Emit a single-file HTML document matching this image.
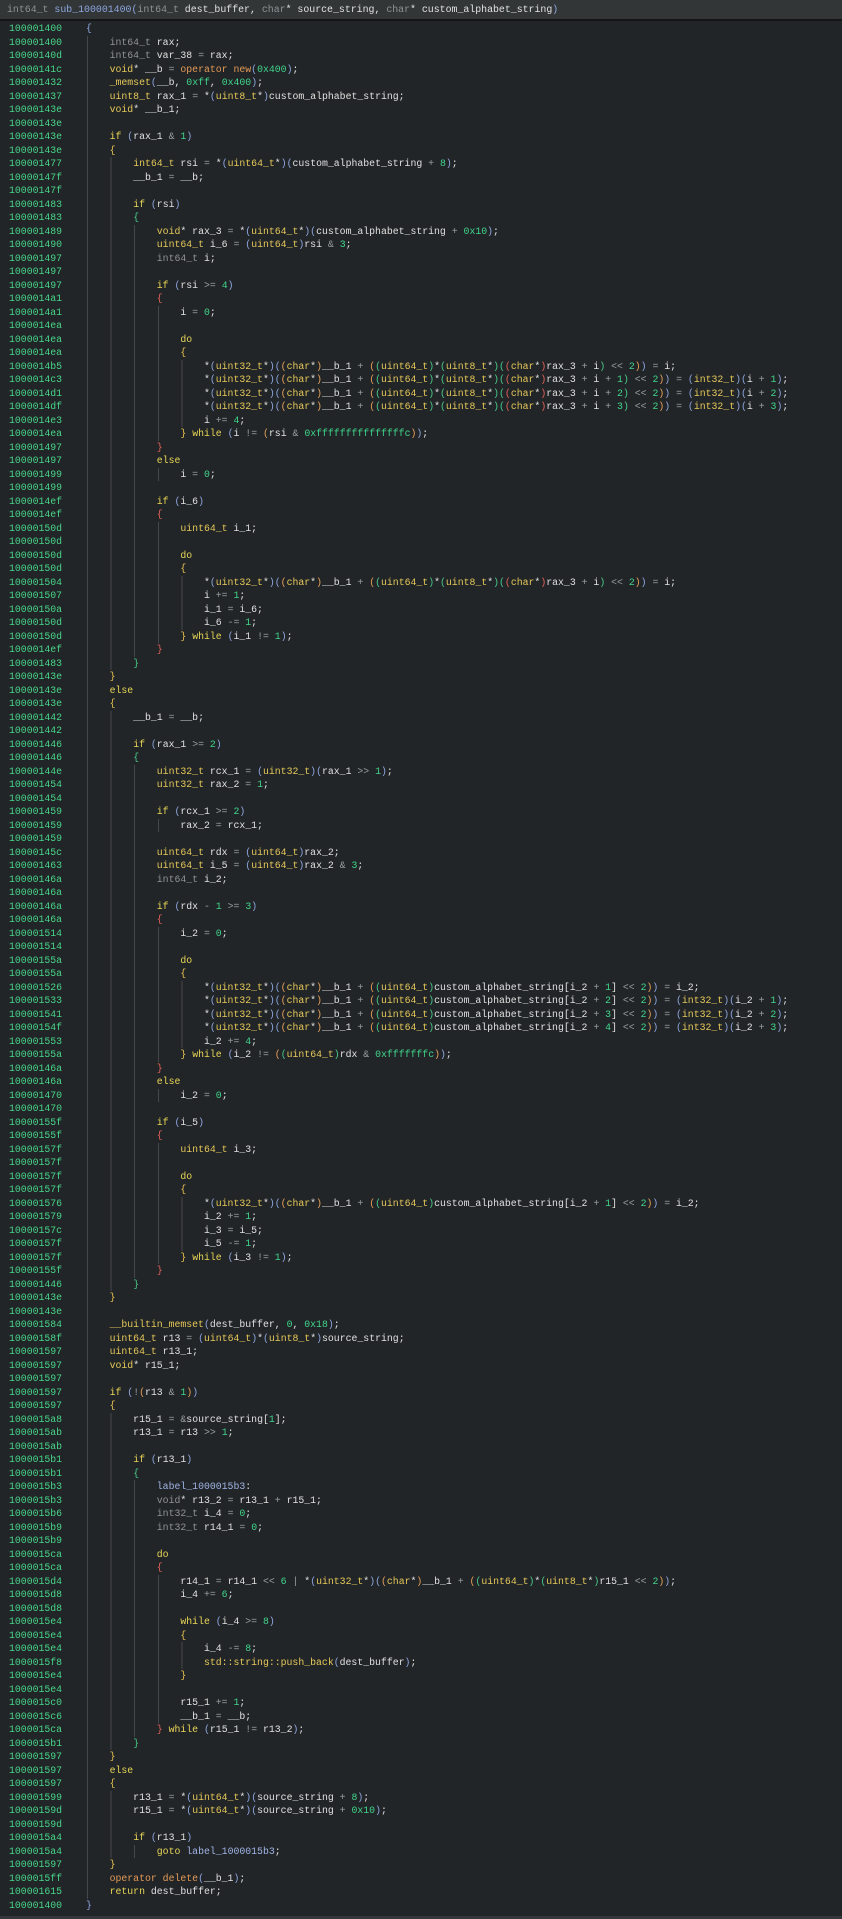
<!DOCTYPE html>
<html><head><meta charset="utf-8"><style>
html,body{margin:0;padding:0;background:#222527;width:842px;height:1919px;overflow:hidden;font-family:"Liberation Mono",monospace;}
#hdr{height:19px;background:#323637;border-bottom:2px solid #141617;font-size:9.9px;line-height:19px;color:#e2e2e2;white-space:pre;padding-left:7px;}
#hdr .g{color:#909294}#hdr .bl{color:#8ea6e0}
#code{position:absolute;left:0;top:22.25px;width:842px;}
.r{position:relative;height:13.5px;line-height:13.5px;font-size:9.83px;white-space:pre;color:#e0e0e0;}
ad{position:absolute;left:9px;top:0;color:#47d68a;}
cd{position:absolute;left:86px;top:0;width:750px;height:13.5px;display:block;background-image:repeating-linear-gradient(90deg,transparent 0,transparent 1px,#45484b 1px,#45484b 2px,transparent 2px,transparent 23.6px);background-repeat:no-repeat;background-size:0 100%;}
.g1 cd{background-size:23.6px 100%}.g2 cd{background-size:47.2px 100%}.g3 cd{background-size:70.8px 100%}
.g4 cd{background-size:94.4px 100%}.g5 cd{background-size:118px 100%}.g6 cd{background-size:141.6px 100%}
k{color:#e8d657}t{color:#e5c85a}d{color:#909294}n{color:#3fd58c}x{color:#9a9ea2}o{color:#e39a58}l{color:#9fb4e6}
q1{color:#8ea6e0}q2{color:#e5a05a}q3{color:#48c98a}q4{color:#e0605a}
c0{color:#8ea6e0}c1{color:#e5c050}c2{color:#48c98a}c3{color:#e0605a}
#bot{position:absolute;left:0;top:1916px;width:842px;height:3px;background:#34383a;}
</style></head><body>
<div id="hdr"><span class="g">int64_t</span> <span class="bl">sub_100001400(</span><span class="g">int64_t</span> dest_buffer, <span class="g">char</span>* source_string, <span class="g">char</span>* custom_alphabet_string<span class="bl">)</span></div>
<div id="code">
<div class="r"><ad>100001400</ad><cd><c0>{</c0></cd></div>
<div class="r g1"><ad>100001400</ad><cd>    <d>int64_t</d> rax;</cd></div>
<div class="r g1"><ad>10000140d</ad><cd>    <d>int64_t</d> var_38 <x>=</x> rax;</cd></div>
<div class="r g1"><ad>10000141c</ad><cd>    <t>void</t>* __b <x>=</x> <o>operator new</o><q1>(</q1><n>0x400</n><q1>)</q1>;</cd></div>
<div class="r g1"><ad>100001432</ad><cd>    <t>_memset</t><q1>(</q1>__b, <n>0xff</n>, <n>0x400</n><q1>)</q1>;</cd></div>
<div class="r g1"><ad>100001437</ad><cd>    <t>uint8_t</t> rax_1 <x>=</x> *<q1>(</q1><t>uint8_t</t>*<q1>)</q1>custom_alphabet_string;</cd></div>
<div class="r g1"><ad>10000143e</ad><cd>    <t>void</t>* __b_1;</cd></div>
<div class="r g1"><ad>10000143e</ad><cd></cd></div>
<div class="r g1"><ad>10000143e</ad><cd>    <k>if</k> <q1>(</q1>rax_1 <x>&amp;</x> <n>1</n><q1>)</q1></cd></div>
<div class="r g1"><ad>10000143e</ad><cd>    <c1>{</c1></cd></div>
<div class="r g2"><ad>100001477</ad><cd>        <t>int64_t</t> rsi <x>=</x> *<q1>(</q1><t>uint64_t</t>*<q1>)</q1><q1>(</q1>custom_alphabet_string <x>+</x> <n>8</n><q1>)</q1>;</cd></div>
<div class="r g2"><ad>10000147f</ad><cd>        __b_1 <x>=</x> __b;</cd></div>
<div class="r g2"><ad>10000147f</ad><cd></cd></div>
<div class="r g2"><ad>100001483</ad><cd>        <k>if</k> <q1>(</q1>rsi<q1>)</q1></cd></div>
<div class="r g2"><ad>100001483</ad><cd>        <c2>{</c2></cd></div>
<div class="r g3"><ad>100001489</ad><cd>            <t>void</t>* rax_3 <x>=</x> *<q1>(</q1><t>uint64_t</t>*<q1>)</q1><q1>(</q1>custom_alphabet_string <x>+</x> <n>0x10</n><q1>)</q1>;</cd></div>
<div class="r g3"><ad>100001490</ad><cd>            <t>uint64_t</t> i_6 <x>=</x> <q1>(</q1><t>uint64_t</t><q1>)</q1>rsi <x>&amp;</x> <n>3</n>;</cd></div>
<div class="r g3"><ad>100001497</ad><cd>            <d>int64_t</d> i;</cd></div>
<div class="r g3"><ad>100001497</ad><cd></cd></div>
<div class="r g3"><ad>100001497</ad><cd>            <k>if</k> <q1>(</q1>rsi <x>&gt;=</x> <n>4</n><q1>)</q1></cd></div>
<div class="r g3"><ad>1000014a1</ad><cd>            <c3>{</c3></cd></div>
<div class="r g4"><ad>1000014a1</ad><cd>                i <x>=</x> <n>0</n>;</cd></div>
<div class="r g4"><ad>1000014ea</ad><cd></cd></div>
<div class="r g4"><ad>1000014ea</ad><cd>                <k>do</k></cd></div>
<div class="r g4"><ad>1000014ea</ad><cd>                <c1>{</c1></cd></div>
<div class="r g5"><ad>1000014b5</ad><cd>                    *<q1>(</q1><t>uint32_t</t>*<q1>)</q1><q1>(</q1><q2>(</q2><t>char</t>*<q2>)</q2>__b_1 <x>+</x> <q2>(</q2><q3>(</q3><t>uint64_t</t><q3>)</q3>*<q3>(</q3><t>uint8_t</t>*<q3>)</q3><q3>(</q3><q4>(</q4><t>char</t>*<q4>)</q4>rax_3 <x>+</x> i<q3>)</q3> <x>&lt;&lt;</x> <n>2</n><q2>)</q2><q1>)</q1> <x>=</x> i;</cd></div>
<div class="r g5"><ad>1000014c3</ad><cd>                    *<q1>(</q1><t>uint32_t</t>*<q1>)</q1><q1>(</q1><q2>(</q2><t>char</t>*<q2>)</q2>__b_1 <x>+</x> <q2>(</q2><q3>(</q3><t>uint64_t</t><q3>)</q3>*<q3>(</q3><t>uint8_t</t>*<q3>)</q3><q3>(</q3><q4>(</q4><t>char</t>*<q4>)</q4>rax_3 <x>+</x> i <x>+</x> <n>1</n><q3>)</q3> <x>&lt;&lt;</x> <n>2</n><q2>)</q2><q1>)</q1> <x>=</x> <q1>(</q1><t>int32_t</t><q1>)</q1><q1>(</q1>i <x>+</x> <n>1</n><q1>)</q1>;</cd></div>
<div class="r g5"><ad>1000014d1</ad><cd>                    *<q1>(</q1><t>uint32_t</t>*<q1>)</q1><q1>(</q1><q2>(</q2><t>char</t>*<q2>)</q2>__b_1 <x>+</x> <q2>(</q2><q3>(</q3><t>uint64_t</t><q3>)</q3>*<q3>(</q3><t>uint8_t</t>*<q3>)</q3><q3>(</q3><q4>(</q4><t>char</t>*<q4>)</q4>rax_3 <x>+</x> i <x>+</x> <n>2</n><q3>)</q3> <x>&lt;&lt;</x> <n>2</n><q2>)</q2><q1>)</q1> <x>=</x> <q1>(</q1><t>int32_t</t><q1>)</q1><q1>(</q1>i <x>+</x> <n>2</n><q1>)</q1>;</cd></div>
<div class="r g5"><ad>1000014df</ad><cd>                    *<q1>(</q1><t>uint32_t</t>*<q1>)</q1><q1>(</q1><q2>(</q2><t>char</t>*<q2>)</q2>__b_1 <x>+</x> <q2>(</q2><q3>(</q3><t>uint64_t</t><q3>)</q3>*<q3>(</q3><t>uint8_t</t>*<q3>)</q3><q3>(</q3><q4>(</q4><t>char</t>*<q4>)</q4>rax_3 <x>+</x> i <x>+</x> <n>3</n><q3>)</q3> <x>&lt;&lt;</x> <n>2</n><q2>)</q2><q1>)</q1> <x>=</x> <q1>(</q1><t>int32_t</t><q1>)</q1><q1>(</q1>i <x>+</x> <n>3</n><q1>)</q1>;</cd></div>
<div class="r g5"><ad>1000014e3</ad><cd>                    i <x>+=</x> <n>4</n>;</cd></div>
<div class="r g4"><ad>1000014ea</ad><cd>                <c1>}</c1> <k>while</k> <q1>(</q1>i <x>!=</x> <q2>(</q2>rsi <x>&amp;</x> <n>0xfffffffffffffffc</n><q2>)</q2><q1>)</q1>;</cd></div>
<div class="r g3"><ad>100001497</ad><cd>            <c3>}</c3></cd></div>
<div class="r g3"><ad>100001497</ad><cd>            <k>else</k></cd></div>
<div class="r g4"><ad>100001499</ad><cd>                i <x>=</x> <n>0</n>;</cd></div>
<div class="r g3"><ad>100001499</ad><cd></cd></div>
<div class="r g3"><ad>1000014ef</ad><cd>            <k>if</k> <q1>(</q1>i_6<q1>)</q1></cd></div>
<div class="r g3"><ad>1000014ef</ad><cd>            <c3>{</c3></cd></div>
<div class="r g4"><ad>10000150d</ad><cd>                <t>uint64_t</t> i_1;</cd></div>
<div class="r g4"><ad>10000150d</ad><cd></cd></div>
<div class="r g4"><ad>10000150d</ad><cd>                <k>do</k></cd></div>
<div class="r g4"><ad>10000150d</ad><cd>                <c1>{</c1></cd></div>
<div class="r g5"><ad>100001504</ad><cd>                    *<q1>(</q1><t>uint32_t</t>*<q1>)</q1><q1>(</q1><q2>(</q2><t>char</t>*<q2>)</q2>__b_1 <x>+</x> <q2>(</q2><q3>(</q3><t>uint64_t</t><q3>)</q3>*<q3>(</q3><t>uint8_t</t>*<q3>)</q3><q3>(</q3><q4>(</q4><t>char</t>*<q4>)</q4>rax_3 <x>+</x> i<q3>)</q3> <x>&lt;&lt;</x> <n>2</n><q2>)</q2><q1>)</q1> <x>=</x> i;</cd></div>
<div class="r g5"><ad>100001507</ad><cd>                    i <x>+=</x> <n>1</n>;</cd></div>
<div class="r g5"><ad>10000150a</ad><cd>                    i_1 <x>=</x> i_6;</cd></div>
<div class="r g5"><ad>10000150d</ad><cd>                    i_6 <x>-=</x> <n>1</n>;</cd></div>
<div class="r g4"><ad>10000150d</ad><cd>                <c1>}</c1> <k>while</k> <q1>(</q1>i_1 <x>!=</x> <n>1</n><q1>)</q1>;</cd></div>
<div class="r g3"><ad>1000014ef</ad><cd>            <c3>}</c3></cd></div>
<div class="r g2"><ad>100001483</ad><cd>        <c2>}</c2></cd></div>
<div class="r g1"><ad>10000143e</ad><cd>    <c1>}</c1></cd></div>
<div class="r g1"><ad>10000143e</ad><cd>    <k>else</k></cd></div>
<div class="r g1"><ad>10000143e</ad><cd>    <c1>{</c1></cd></div>
<div class="r g2"><ad>100001442</ad><cd>        __b_1 <x>=</x> __b;</cd></div>
<div class="r g2"><ad>100001442</ad><cd></cd></div>
<div class="r g2"><ad>100001446</ad><cd>        <k>if</k> <q1>(</q1>rax_1 <x>&gt;=</x> <n>2</n><q1>)</q1></cd></div>
<div class="r g2"><ad>100001446</ad><cd>        <c2>{</c2></cd></div>
<div class="r g3"><ad>10000144e</ad><cd>            <t>uint32_t</t> rcx_1 <x>=</x> <q1>(</q1><t>uint32_t</t><q1>)</q1><q1>(</q1>rax_1 <x>&gt;&gt;</x> <n>1</n><q1>)</q1>;</cd></div>
<div class="r g3"><ad>100001454</ad><cd>            <t>uint32_t</t> rax_2 <x>=</x> <n>1</n>;</cd></div>
<div class="r g3"><ad>100001454</ad><cd></cd></div>
<div class="r g3"><ad>100001459</ad><cd>            <k>if</k> <q1>(</q1>rcx_1 <x>&gt;=</x> <n>2</n><q1>)</q1></cd></div>
<div class="r g4"><ad>100001459</ad><cd>                rax_2 <x>=</x> rcx_1;</cd></div>
<div class="r g3"><ad>100001459</ad><cd></cd></div>
<div class="r g3"><ad>10000145c</ad><cd>            <t>uint64_t</t> rdx <x>=</x> <q1>(</q1><t>uint64_t</t><q1>)</q1>rax_2;</cd></div>
<div class="r g3"><ad>100001463</ad><cd>            <t>uint64_t</t> i_5 <x>=</x> <q1>(</q1><t>uint64_t</t><q1>)</q1>rax_2 <x>&amp;</x> <n>3</n>;</cd></div>
<div class="r g3"><ad>10000146a</ad><cd>            <d>int64_t</d> i_2;</cd></div>
<div class="r g3"><ad>10000146a</ad><cd></cd></div>
<div class="r g3"><ad>10000146a</ad><cd>            <k>if</k> <q1>(</q1>rdx <x>-</x> <n>1</n> <x>&gt;=</x> <n>3</n><q1>)</q1></cd></div>
<div class="r g3"><ad>10000146a</ad><cd>            <c3>{</c3></cd></div>
<div class="r g4"><ad>100001514</ad><cd>                i_2 <x>=</x> <n>0</n>;</cd></div>
<div class="r g4"><ad>100001514</ad><cd></cd></div>
<div class="r g4"><ad>10000155a</ad><cd>                <k>do</k></cd></div>
<div class="r g4"><ad>10000155a</ad><cd>                <c1>{</c1></cd></div>
<div class="r g5"><ad>100001526</ad><cd>                    *<q1>(</q1><t>uint32_t</t>*<q1>)</q1><q1>(</q1><q2>(</q2><t>char</t>*<q2>)</q2>__b_1 <x>+</x> <q2>(</q2><q3>(</q3><t>uint64_t</t><q3>)</q3>custom_alphabet_string[i_2 <x>+</x> <n>1</n>] <x>&lt;&lt;</x> <n>2</n><q2>)</q2><q1>)</q1> <x>=</x> i_2;</cd></div>
<div class="r g5"><ad>100001533</ad><cd>                    *<q1>(</q1><t>uint32_t</t>*<q1>)</q1><q1>(</q1><q2>(</q2><t>char</t>*<q2>)</q2>__b_1 <x>+</x> <q2>(</q2><q3>(</q3><t>uint64_t</t><q3>)</q3>custom_alphabet_string[i_2 <x>+</x> <n>2</n>] <x>&lt;&lt;</x> <n>2</n><q2>)</q2><q1>)</q1> <x>=</x> <q1>(</q1><t>int32_t</t><q1>)</q1><q1>(</q1>i_2 <x>+</x> <n>1</n><q1>)</q1>;</cd></div>
<div class="r g5"><ad>100001541</ad><cd>                    *<q1>(</q1><t>uint32_t</t>*<q1>)</q1><q1>(</q1><q2>(</q2><t>char</t>*<q2>)</q2>__b_1 <x>+</x> <q2>(</q2><q3>(</q3><t>uint64_t</t><q3>)</q3>custom_alphabet_string[i_2 <x>+</x> <n>3</n>] <x>&lt;&lt;</x> <n>2</n><q2>)</q2><q1>)</q1> <x>=</x> <q1>(</q1><t>int32_t</t><q1>)</q1><q1>(</q1>i_2 <x>+</x> <n>2</n><q1>)</q1>;</cd></div>
<div class="r g5"><ad>10000154f</ad><cd>                    *<q1>(</q1><t>uint32_t</t>*<q1>)</q1><q1>(</q1><q2>(</q2><t>char</t>*<q2>)</q2>__b_1 <x>+</x> <q2>(</q2><q3>(</q3><t>uint64_t</t><q3>)</q3>custom_alphabet_string[i_2 <x>+</x> <n>4</n>] <x>&lt;&lt;</x> <n>2</n><q2>)</q2><q1>)</q1> <x>=</x> <q1>(</q1><t>int32_t</t><q1>)</q1><q1>(</q1>i_2 <x>+</x> <n>3</n><q1>)</q1>;</cd></div>
<div class="r g5"><ad>100001553</ad><cd>                    i_2 <x>+=</x> <n>4</n>;</cd></div>
<div class="r g4"><ad>10000155a</ad><cd>                <c1>}</c1> <k>while</k> <q1>(</q1>i_2 <x>!=</x> <q2>(</q2><q3>(</q3><t>uint64_t</t><q3>)</q3>rdx <x>&amp;</x> <n>0xfffffffc</n><q2>)</q2><q1>)</q1>;</cd></div>
<div class="r g3"><ad>10000146a</ad><cd>            <c3>}</c3></cd></div>
<div class="r g3"><ad>10000146a</ad><cd>            <k>else</k></cd></div>
<div class="r g4"><ad>100001470</ad><cd>                i_2 <x>=</x> <n>0</n>;</cd></div>
<div class="r g3"><ad>100001470</ad><cd></cd></div>
<div class="r g3"><ad>10000155f</ad><cd>            <k>if</k> <q1>(</q1>i_5<q1>)</q1></cd></div>
<div class="r g3"><ad>10000155f</ad><cd>            <c3>{</c3></cd></div>
<div class="r g4"><ad>10000157f</ad><cd>                <t>uint64_t</t> i_3;</cd></div>
<div class="r g4"><ad>10000157f</ad><cd></cd></div>
<div class="r g4"><ad>10000157f</ad><cd>                <k>do</k></cd></div>
<div class="r g4"><ad>10000157f</ad><cd>                <c1>{</c1></cd></div>
<div class="r g5"><ad>100001576</ad><cd>                    *<q1>(</q1><t>uint32_t</t>*<q1>)</q1><q1>(</q1><q2>(</q2><t>char</t>*<q2>)</q2>__b_1 <x>+</x> <q2>(</q2><q3>(</q3><t>uint64_t</t><q3>)</q3>custom_alphabet_string[i_2 <x>+</x> <n>1</n>] <x>&lt;&lt;</x> <n>2</n><q2>)</q2><q1>)</q1> <x>=</x> i_2;</cd></div>
<div class="r g5"><ad>100001579</ad><cd>                    i_2 <x>+=</x> <n>1</n>;</cd></div>
<div class="r g5"><ad>10000157c</ad><cd>                    i_3 <x>=</x> i_5;</cd></div>
<div class="r g5"><ad>10000157f</ad><cd>                    i_5 <x>-=</x> <n>1</n>;</cd></div>
<div class="r g4"><ad>10000157f</ad><cd>                <c1>}</c1> <k>while</k> <q1>(</q1>i_3 <x>!=</x> <n>1</n><q1>)</q1>;</cd></div>
<div class="r g3"><ad>10000155f</ad><cd>            <c3>}</c3></cd></div>
<div class="r g2"><ad>100001446</ad><cd>        <c2>}</c2></cd></div>
<div class="r g1"><ad>10000143e</ad><cd>    <c1>}</c1></cd></div>
<div class="r g1"><ad>10000143e</ad><cd></cd></div>
<div class="r g1"><ad>100001584</ad><cd>    <t>__builtin_memset</t><q1>(</q1>dest_buffer, <n>0</n>, <n>0x18</n><q1>)</q1>;</cd></div>
<div class="r g1"><ad>10000158f</ad><cd>    <t>uint64_t</t> r13 <x>=</x> <q1>(</q1><t>uint64_t</t><q1>)</q1>*<q1>(</q1><t>uint8_t</t>*<q1>)</q1>source_string;</cd></div>
<div class="r g1"><ad>100001597</ad><cd>    <t>uint64_t</t> r13_1;</cd></div>
<div class="r g1"><ad>100001597</ad><cd>    <t>void</t>* r15_1;</cd></div>
<div class="r g1"><ad>100001597</ad><cd></cd></div>
<div class="r g1"><ad>100001597</ad><cd>    <k>if</k> <q1>(</q1><x>!</x><q2>(</q2>r13 <x>&amp;</x> <n>1</n><q2>)</q2><q1>)</q1></cd></div>
<div class="r g1"><ad>100001597</ad><cd>    <c1>{</c1></cd></div>
<div class="r g2"><ad>1000015a8</ad><cd>        r15_1 <x>=</x> <x>&amp;</x>source_string[<n>1</n>];</cd></div>
<div class="r g2"><ad>1000015ab</ad><cd>        r13_1 <x>=</x> r13 <x>&gt;&gt;</x> <n>1</n>;</cd></div>
<div class="r g2"><ad>1000015ab</ad><cd></cd></div>
<div class="r g2"><ad>1000015b1</ad><cd>        <k>if</k> <q1>(</q1>r13_1<q1>)</q1></cd></div>
<div class="r g2"><ad>1000015b1</ad><cd>        <c2>{</c2></cd></div>
<div class="r g3"><ad>1000015b3</ad><cd>            <l>label_1000015b3</l>:</cd></div>
<div class="r g3"><ad>1000015b3</ad><cd>            <d>void</d>* r13_2 <x>=</x> r13_1 <x>+</x> r15_1;</cd></div>
<div class="r g3"><ad>1000015b6</ad><cd>            <d>int32_t</d> i_4 <x>=</x> <n>0</n>;</cd></div>
<div class="r g3"><ad>1000015b9</ad><cd>            <d>int32_t</d> r14_1 <x>=</x> <n>0</n>;</cd></div>
<div class="r g3"><ad>1000015b9</ad><cd></cd></div>
<div class="r g3"><ad>1000015ca</ad><cd>            <k>do</k></cd></div>
<div class="r g3"><ad>1000015ca</ad><cd>            <c3>{</c3></cd></div>
<div class="r g4"><ad>1000015d4</ad><cd>                r14_1 <x>=</x> r14_1 <x>&lt;&lt;</x> <n>6</n> <x>|</x> *<q1>(</q1><t>uint32_t</t>*<q1>)</q1><q1>(</q1><q2>(</q2><t>char</t>*<q2>)</q2>__b_1 <x>+</x> <q2>(</q2><q3>(</q3><t>uint64_t</t><q3>)</q3>*<q3>(</q3><t>uint8_t</t>*<q3>)</q3>r15_1 <x>&lt;&lt;</x> <n>2</n><q2>)</q2><q1>)</q1>;</cd></div>
<div class="r g4"><ad>1000015d8</ad><cd>                i_4 <x>+=</x> <n>6</n>;</cd></div>
<div class="r g4"><ad>1000015d8</ad><cd></cd></div>
<div class="r g4"><ad>1000015e4</ad><cd>                <k>while</k> <q1>(</q1>i_4 <x>&gt;=</x> <n>8</n><q1>)</q1></cd></div>
<div class="r g4"><ad>1000015e4</ad><cd>                <c1>{</c1></cd></div>
<div class="r g5"><ad>1000015e4</ad><cd>                    i_4 <x>-=</x> <n>8</n>;</cd></div>
<div class="r g5"><ad>1000015f8</ad><cd>                    <t>std::string::push_back</t><q1>(</q1>dest_buffer<q1>)</q1>;</cd></div>
<div class="r g4"><ad>1000015e4</ad><cd>                <c1>}</c1></cd></div>
<div class="r g4"><ad>1000015e4</ad><cd></cd></div>
<div class="r g4"><ad>1000015c0</ad><cd>                r15_1 <x>+=</x> <n>1</n>;</cd></div>
<div class="r g4"><ad>1000015c6</ad><cd>                __b_1 <x>=</x> __b;</cd></div>
<div class="r g3"><ad>1000015ca</ad><cd>            <c3>}</c3> <k>while</k> <q1>(</q1>r15_1 <x>!=</x> r13_2<q1>)</q1>;</cd></div>
<div class="r g2"><ad>1000015b1</ad><cd>        <c2>}</c2></cd></div>
<div class="r g1"><ad>100001597</ad><cd>    <c1>}</c1></cd></div>
<div class="r g1"><ad>100001597</ad><cd>    <k>else</k></cd></div>
<div class="r g1"><ad>100001597</ad><cd>    <c1>{</c1></cd></div>
<div class="r g2"><ad>100001599</ad><cd>        r13_1 <x>=</x> *<q1>(</q1><t>uint64_t</t>*<q1>)</q1><q1>(</q1>source_string <x>+</x> <n>8</n><q1>)</q1>;</cd></div>
<div class="r g2"><ad>10000159d</ad><cd>        r15_1 <x>=</x> *<q1>(</q1><t>uint64_t</t>*<q1>)</q1><q1>(</q1>source_string <x>+</x> <n>0x10</n><q1>)</q1>;</cd></div>
<div class="r g2"><ad>10000159d</ad><cd></cd></div>
<div class="r g2"><ad>1000015a4</ad><cd>        <k>if</k> <q1>(</q1>r13_1<q1>)</q1></cd></div>
<div class="r g3"><ad>1000015a4</ad><cd>            <k>goto</k> <l>label_1000015b3</l>;</cd></div>
<div class="r g1"><ad>100001597</ad><cd>    <c1>}</c1></cd></div>
<div class="r g1"><ad>1000015ff</ad><cd>    <o>operator delete</o><q1>(</q1>__b_1<q1>)</q1>;</cd></div>
<div class="r g1"><ad>100001615</ad><cd>    <k>return</k> dest_buffer;</cd></div>
<div class="r"><ad>100001400</ad><cd><c0>}</c0></cd></div>
</div>
<div id="bot"></div>
</body></html>
